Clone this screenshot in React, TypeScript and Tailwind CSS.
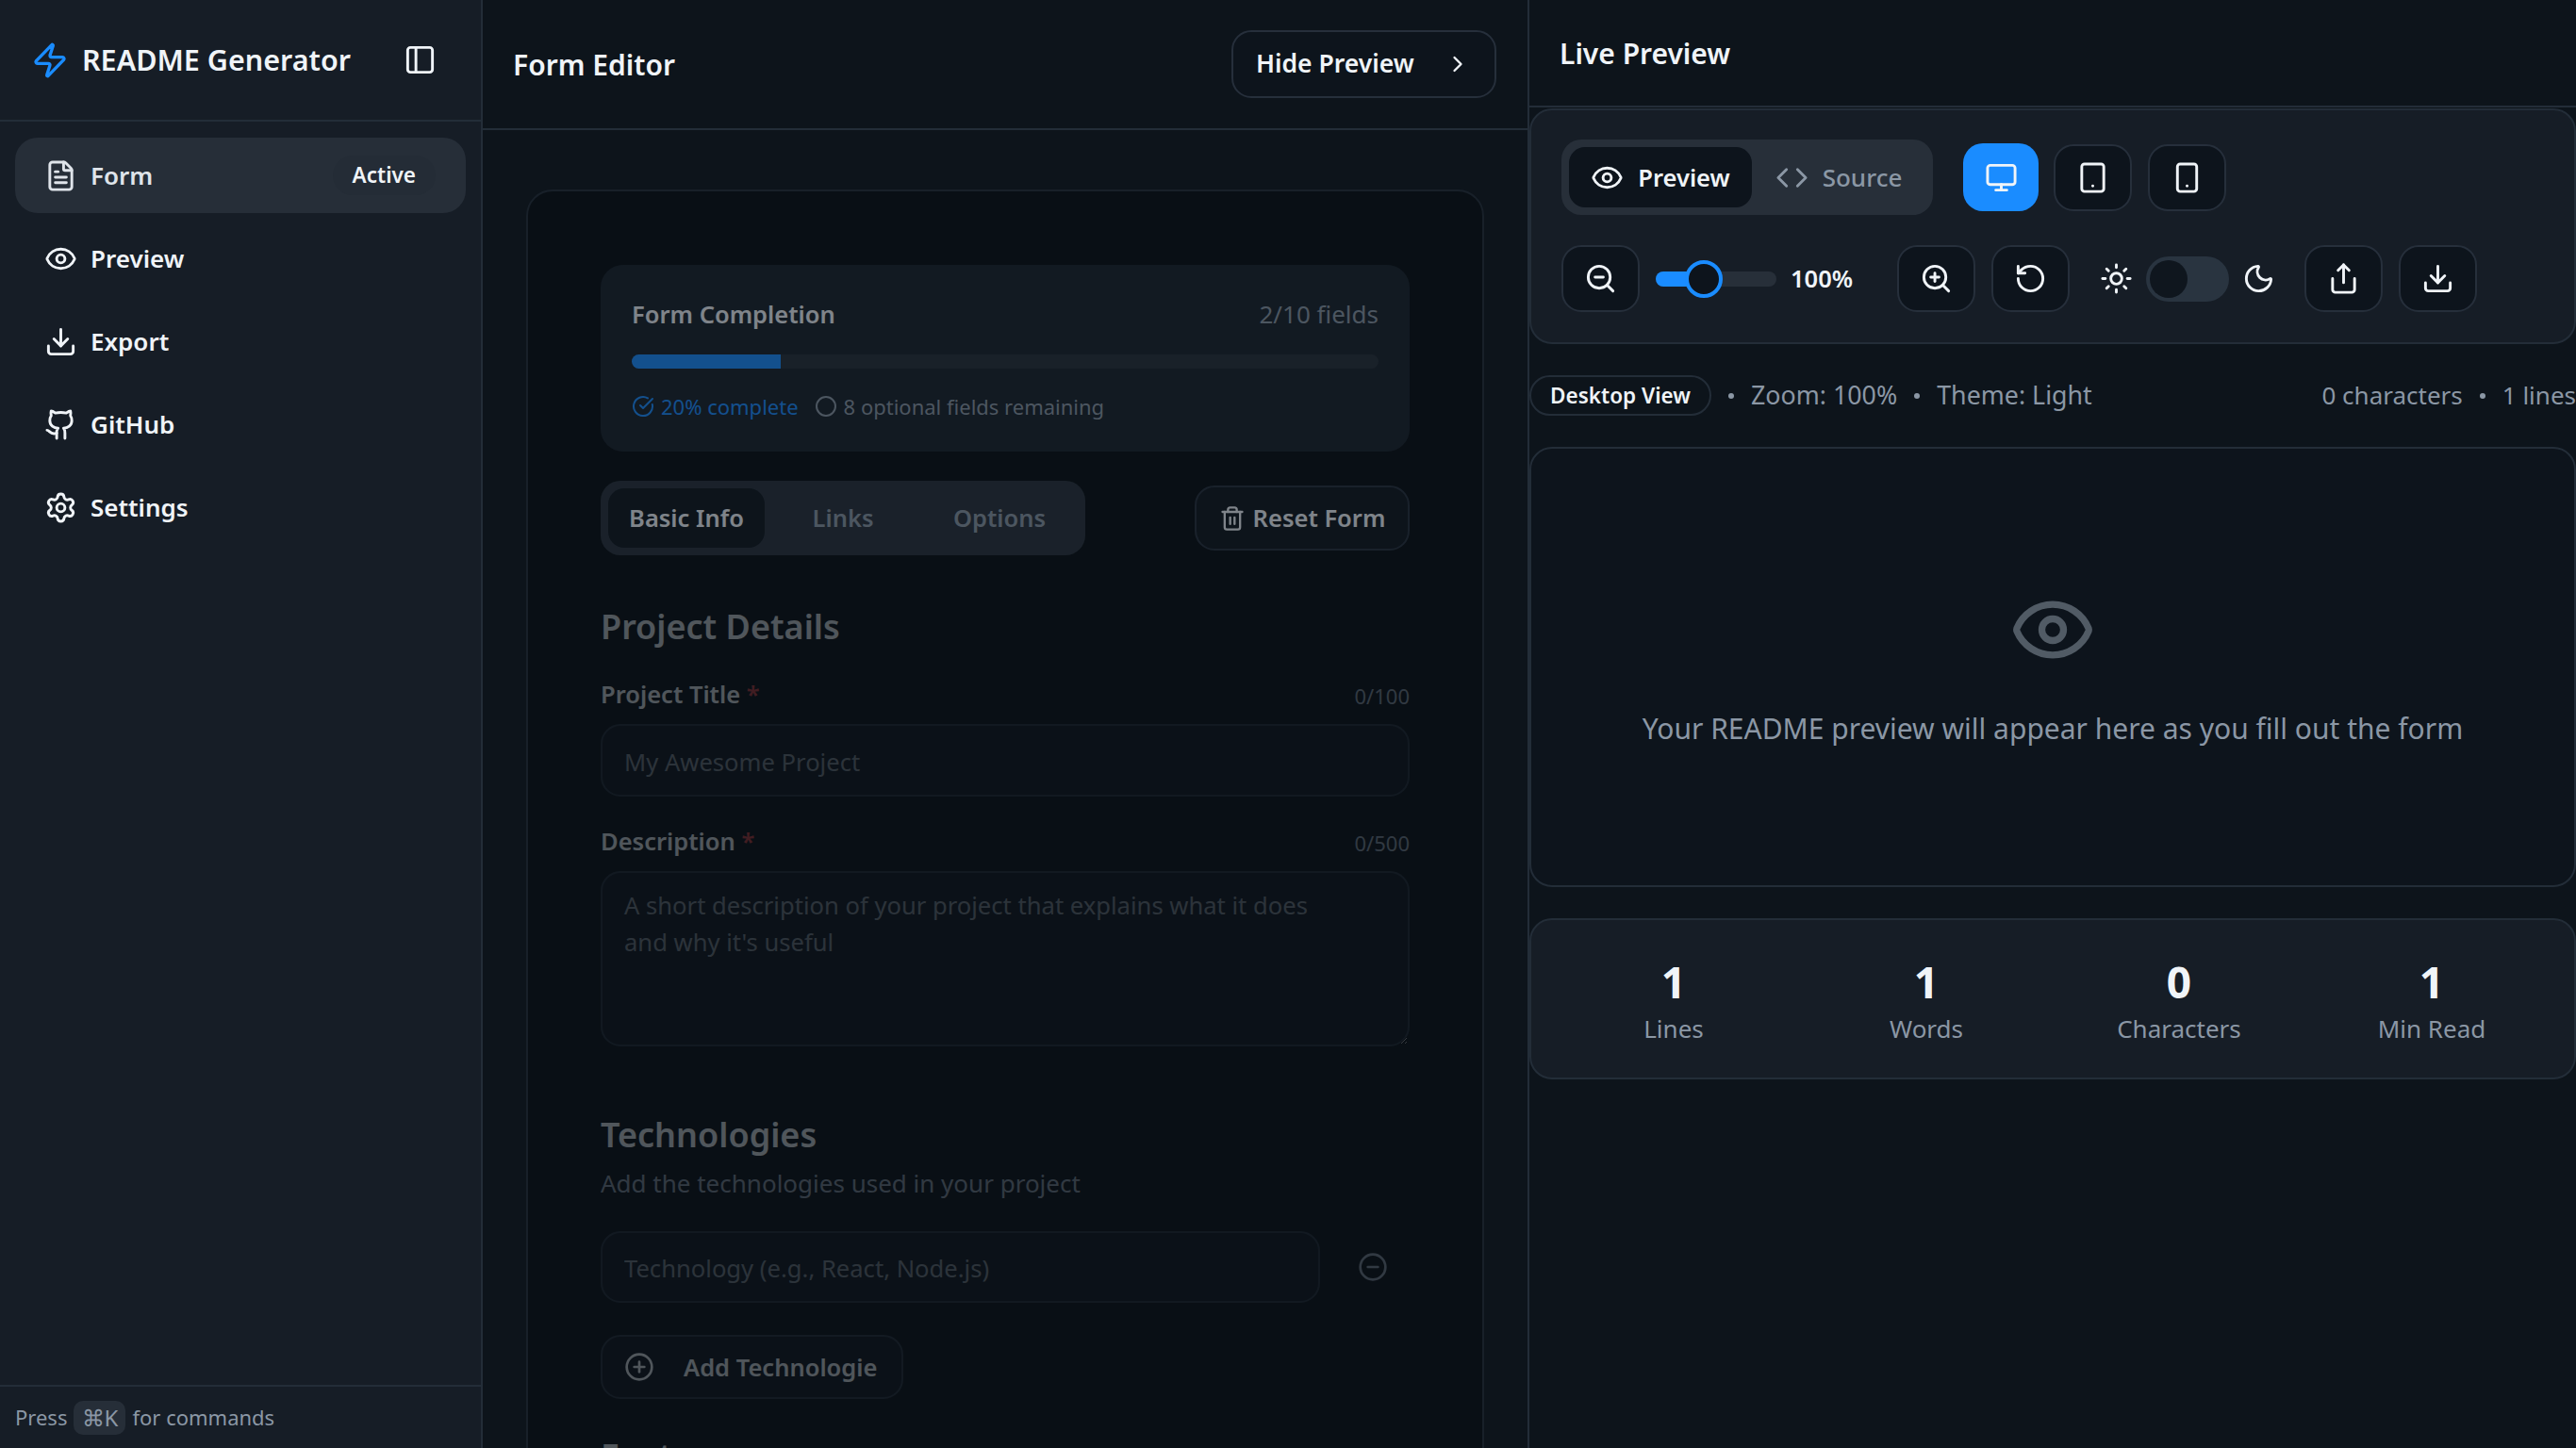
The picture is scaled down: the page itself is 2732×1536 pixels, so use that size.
import React from "react";
import {
  Zap, PanelLeft, FileText, Eye, Download, Github, Settings, ChevronRight, CircleCheckBig, Circle, Trash2,
  CircleMinus, CirclePlus, Code, Monitor, Tablet, Smartphone, ZoomOut, ZoomIn, RotateCcw, Sun, Moon, Share,
} from "lucide-react";

function NavItem({ icon: Icon, label, active }: { icon: React.ElementType; label: string; active?: boolean }) {
  return (
    <div
      className={
        "flex h-[80px] items-center rounded-[24px] pl-[31px] pr-[32px] text-[26px] font-semibold " +
        (active ? "bg-[#262e38] text-[#dfe4ea]" : "text-[#f0f4f8]")
      }
    >
      <Icon size={35} strokeWidth={2} className="shrink-0" />
      <span className="ml-[14px]">{label}</span>
      {active && (
        <span className="ml-auto rounded-full bg-[#242c36] px-[21px] py-[4px] text-[22.5px] font-semibold text-[#f0f4f8]">
          Active
        </span>
      )}
    </div>
  );
}

function IconBtn({ icon: Icon }: { icon: React.ElementType }) {
  return (
    <button className="flex h-[71px] w-[83px] shrink-0 items-center justify-center rounded-[21px] border-2 border-[#262f3b] bg-[#0d141c] text-[#f0f4f8]">
      <Icon size={35} strokeWidth={2} />
    </button>
  );
}

function Sidebar() {
  return (
    <aside className="flex h-full w-[512px] shrink-0 flex-col border-r-2 border-[#232d38] bg-[#161d26]">
      <div className="flex h-[129px] shrink-0 items-center border-b-2 border-[#232d38] pl-[33px] pr-[47px]">
        <Zap size={40} strokeWidth={2} className="shrink-0 text-[#1a8cff]" />
        <span className="ml-[14px] text-[30.5px] font-semibold text-[#f0f4f8]">README Generator</span>
        <PanelLeft size={35} strokeWidth={2} className="ml-auto shrink-0 text-[#f0f4f8]" />
      </div>
      <nav className="flex flex-1 flex-col gap-[8px] px-[16px] pt-[17px]">
        <NavItem icon={FileText} label="Form" active />
        <NavItem icon={Eye} label="Preview" />
        <NavItem icon={Download} label="Export" />
        <NavItem icon={Github} label="GitHub" />
        <NavItem icon={Settings} label="Settings" />
      </nav>
      <div className="flex h-[67px] shrink-0 items-center border-t-2 border-[#232d38] pl-[16px] text-[22px] text-[#8b97a5]">
        Press
        <kbd className="mx-[7px] flex h-[36px] w-[55px] items-center justify-center rounded-[10px] bg-[#262e38] font-['Noto_Sans',sans-serif] text-[24px]">
          ⌘K
        </kbd>
        for commands
      </div>
    </aside>
  );
}

function FieldLabel({ label, count }: { label: string; count: string }) {
  return (
    <div className="flex h-[34px] items-center justify-between">
      <span className="pb-[2px] text-[25.5px] font-semibold text-[#f0f4f8]">
        {label} <span className="text-[#c0383c]">*</span>
      </span>
      <span className="pt-[2px] text-[22px] text-[#8b97a5]">{count}</span>
    </div>
  );
}

function FormPanel() {
  const fieldClass =
    "rounded-[21px] border-2 border-[#232d38] bg-[#0d141c] px-[23px] text-[25.6px] text-[#f0f4f8] outline-none placeholder:text-[#7a828b]";
  return (
    <main className="flex h-full w-[1110px] shrink-0 flex-col border-r-2 border-[#232d38] bg-[#0d141b]">
      <header className="flex h-[138px] shrink-0 items-center justify-between border-b-2 border-[#232d38] pl-[32px] pr-[33px]">
        <h1 className="text-[30px] font-semibold text-[#f0f4f8]">Form Editor</h1>
        <button className="flex h-[72px] w-[281px] items-center rounded-[21px] border-2 border-[#262f3b] bg-[#0d141c] pl-[24px] text-[26.5px] font-semibold text-[#f0f4f8]">
          Hide Preview
          <ChevronRight size={28} strokeWidth={2} className="ml-[32px]" />
        </button>
      </header>
      <div className="min-h-0 flex-1 overflow-hidden pl-[46px] pr-[46px] pt-[63px]">
        <div className="rounded-[28px] border-2 border-[#232d38] bg-[#070c11] px-[77px] pt-[78px] opacity-50">
          <section className="h-[198px] rounded-[24px] bg-[#18202a] px-[33px] pt-[34px]">
            <div className="flex h-[37px] items-center justify-between">
              <span className="text-[25.5px] font-semibold text-[#f0f4f8]">Form Completion</span>
              <span className="text-[26px] text-[#8b97a5]">2/10 fields</span>
            </div>
            <div className="mt-[24px] h-[15px] overflow-hidden rounded-full bg-[#262e38]">
              <div className="h-full bg-[#1a8cff]" style={{ width: "20%" }} />
            </div>
            <div className="mt-[26px] flex h-[28px] items-center text-[22px]">
              <CircleCheckBig size={24} strokeWidth={2} className="text-[#1a8cff]" />
              <span className="ml-[7px] text-[#1a8cff]">20% complete</span>
              <Circle size={24} strokeWidth={2} className="ml-[17px] text-[#8b97a5]" />
              <span className="ml-[7px] text-[#8b97a5]">8 optional fields remaining</span>
            </div>
          </section>

          <div className="mt-[31px] flex items-center justify-between">
            <div className="grid h-[79px] w-[514px] grid-cols-3 rounded-[21px] bg-[#272f39] p-[8px] text-[25.5px] font-semibold text-[#8b97a5]">
              <div className="flex items-center justify-center rounded-[17px] bg-[#0d141c] text-[#f0f4f8]">Basic Info</div>
              <div className="flex items-center justify-center">Links</div>
              <div className="flex items-center justify-center">Options</div>
            </div>
            <button className="flex h-[69px] w-[228px] items-center justify-center rounded-[21px] border-2 border-[#262f3b] bg-[#0d141c] text-[25.5px] font-semibold text-[#f0f4f8]">
              <Trash2 size={28} strokeWidth={2} className="mr-[8px]" />
              Reset Form
            </button>
          </div>

          <div className="opacity-60">
            <h2 className="mt-[51px] text-[36px] leading-[49px] font-semibold text-[#f0f4f8]">Project Details</h2>
            <div className="mt-[31px]">
              <FieldLabel label="Project Title" count="0/100" />
              <input readOnly placeholder="My Awesome Project" className={"mt-[14px] h-[77px] w-full pt-[3px] " + fieldClass} />
            </div>
            <div className="mt-[31px]">
              <FieldLabel label="Description" count="0/500" />
              <textarea
                readOnly
                placeholder="A short description of your project that explains what it does and why it's useful"
                className={"mt-[14px] block h-[186px] w-full py-[15px] pr-[60px] leading-[39px] " + fieldClass}
              />
            </div>

            <h2 className="mt-[69px] text-[36px] leading-[49px] font-semibold text-[#f0f4f8]">Technologies</h2>
            <p className="mt-[10px] text-[26px] leading-[35px] text-[#8b97a5]">Add the technologies used in your project</p>
            <div className="mt-[33px] flex items-center">
              <input readOnly placeholder="Technology (e.g., React, Node.js)" className={"h-[76px] w-[763px] pt-[3px] " + fieldClass} />
              <CircleMinus size={32} strokeWidth={2} className="ml-[40px] text-[#8b97a5]" />
            </div>
            <button className="mt-[34px] flex h-[68px] w-[321px] items-center rounded-[21px] border-2 border-[#262f3b] bg-[#0d141c] pl-[23px] text-[25.5px] font-semibold text-[#f0f4f8]">
              <CirclePlus size={32} strokeWidth={2} />
              <span className="ml-[31px]">Add Technologie</span>
            </button>
            <h2 className="mt-[36px] text-[36px] leading-[49px] font-semibold text-[#f0f4f8]">Features</h2>
          </div>
        </div>
      </div>
    </main>
  );
}

function Dot() {
  return <span className="mx-[18px] h-[6px] w-[6px] rounded-full bg-[#8b97a5]" />;
}

function Stat({ value, label }: { value: string; label: string }) {
  return (
    <div className="flex flex-col items-center">
      <span className="text-[46px] leading-[56px] font-bold text-[#f0f4f8]">{value}</span>
      <span className="mt-[4px] text-[26px] leading-[36px] text-[#8b97a5]">{label}</span>
    </div>
  );
}

function PreviewPanel() {
  return (
    <section className="flex h-full min-w-0 flex-1 flex-col bg-[#0d141b]">
      <header className="flex h-[114px] shrink-0 items-center border-b-2 border-[#232d38] pl-[32px]">
        <h2 className="text-[30px] font-semibold text-[#f0f4f8]">Live Preview</h2>
      </header>
      <div className="flex flex-col">
        <div className="mt-[1px] h-[250px] rounded-[24px] border-2 border-[#232d38] bg-[#161d26] pl-[32px] pt-[31px]">
          <div className="flex items-center">
            <div className="flex h-[80px] w-[394px] items-center rounded-[21px] bg-[#272f39] p-[8px] text-[26px] font-medium">
              <div className="flex h-[64px] w-[194px] items-center justify-center rounded-[17px] bg-[#0d141c] text-[25.5px] font-semibold text-[#f0f4f8]">
                <Eye size={35} strokeWidth={2} />
                <span className="ml-[15px]">Preview</span>
              </div>
              <div className="flex h-[64px] w-[184px] items-center justify-center text-[#8b97a5]">
                <Code size={35} strokeWidth={2} />
                <span className="ml-[15px]">Source</span>
              </div>
            </div>
            <button className="ml-[32px] flex h-[72px] w-[80px] items-center justify-center rounded-[21px] bg-[#1a8cff] text-[#f0f4f8]">
              <Monitor size={35} strokeWidth={2} />
            </button>
            <div className="ml-[16px] flex gap-[17px]">
              <IconBtn icon={Tablet} />
              <IconBtn icon={Smartphone} />
            </div>
          </div>
          <div className="mt-[32px] flex items-center">
            <IconBtn icon={ZoomOut} />
            <div className="relative ml-[17px] h-[16px] w-[128px] rounded-full bg-[#272f39]">
              <div className="h-full w-[50px] rounded-l-full bg-[#1a8cff]" />
              <div className="absolute left-[31px] top-[-12px] h-[40px] w-[40px] rounded-full border-[4px] border-[#1a8cff] bg-[#0d141c]" />
            </div>
            <span className="ml-[15px] w-[66px] text-[25.5px] font-semibold whitespace-nowrap text-[#f0f4f8]">100%</span>
            <div className="ml-[47px] flex gap-[17px]">
              <IconBtn icon={ZoomIn} />
              <IconBtn icon={RotateCcw} />
            </div>
            <Sun size={35} strokeWidth={2} className="ml-[32px] text-[#f0f4f8]" />
            <div className="ml-[14px] flex h-[48px] w-[88px] items-center rounded-full bg-[#293440] pl-[4px]">
              <div className="h-[40px] w-[40px] rounded-full bg-[#0f161e]" />
            </div>
            <Moon size={35} strokeWidth={2} className="ml-[14px] text-[#f0f4f8]" />
            <div className="ml-[31px] flex gap-[17px]">
              <IconBtn icon={Share} />
              <IconBtn icon={Download} />
            </div>
          </div>
        </div>

        <div className="mt-[33px] flex h-[43px] items-center justify-between text-[#8b97a5]">
          <div className="flex items-center text-[26.8px]">
            <span className="flex h-[43px] w-[193px] items-center justify-center rounded-full border-2 border-[#232d38] text-[22.5px] font-semibold text-[#f0f4f8]">
              Desktop View
            </span>
            <Dot />
            <span>Zoom: 100%</span>
            <Dot />
            <span>Theme: Light</span>
          </div>
          <div className="flex items-center text-[26px]">
            <span>0 characters</span>
            <Dot />
            <span>1 lines</span>
          </div>
        </div>

        <div className="mt-[33px] flex h-[467px] flex-col items-center rounded-[24px] border-2 border-[#232d38] bg-[#0d141c] pt-[146px]">
          <Eye size={92} strokeWidth={1.9} className="text-[#515b65]" />
          <p className="mt-[38px] text-[30px] leading-[42px] text-[#8b97a5]">Your README preview will appear here as you fill out the form</p>
        </div>

        <div className="mt-[33px] grid h-[171px] grid-cols-4 items-center rounded-[24px] border-2 border-[#232d38] bg-[#161d26] px-[17px] pt-[3px]">
          <Stat value="1" label="Lines" />
          <Stat value="1" label="Words" />
          <Stat value="0" label="Characters" />
          <Stat value="1" label="Min Read" />
        </div>
      </div>
    </section>
  );
}

export default function App() {
  return (
    <div className="flex h-screen w-full overflow-hidden bg-[#0d141b] font-['Noto_Sans',sans-serif]">
      <Sidebar />
      <FormPanel />
      <PreviewPanel />
    </div>
  );
}
